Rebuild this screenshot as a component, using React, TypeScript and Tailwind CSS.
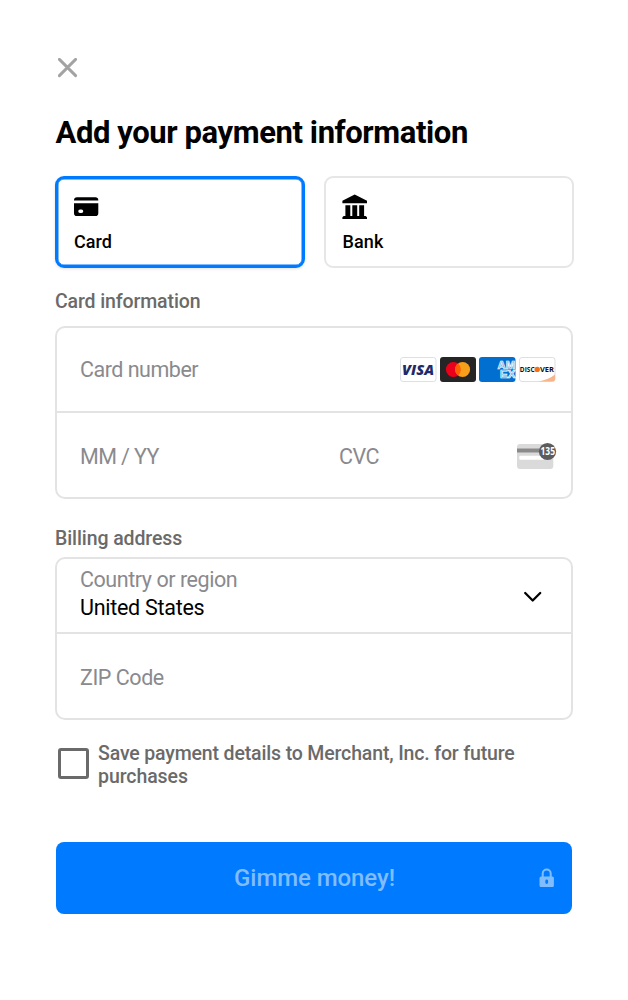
import React from "react";

function CloseIcon() {
  return (
    <svg width="20" height="20" viewBox="0 0 20 20" fill="none" stroke="#a3a3a3" strokeWidth="2.9" strokeLinecap="round">
      <path d="M1.4 1.4 17.600 17.600M17.600 1.400 1.400 17.600" />
    </svg>
  );
}

function CardIcon() {
  return (
    <svg width="26" height="26" viewBox="0 0 26 26">
      <path d="M0 6.6V6a3 3 0 0 1 3-2.8h18.4A3 3 0 0 1 24.3 6v.6Z" />
      <path fillRule="evenodd" d="M0 9.2h24.3v10a2.8 2.8 0 0 1-2.8 2.8H2.8A2.8 2.8 0 0 1 0 19.200ZM6 15.400a1.750 1.750 0 0 0 0 3.500h1.500a1.750 1.750 0 0 0 0-3.500Z" />
    </svg>
  );
}

function BankIcon() {
  return (
    <svg width="26" height="26" viewBox="0 0 26 26">
      <path d="M12.700.400 25 6.700V9.200H.4V6.700ZM3.400 11.200h4.900v11H3.400ZM10.300 11.200h4.900v11h-4.900ZM17.200 11.200h4.900v11h-4.900Z" />
      <path d="M1.700 22h22l1.300 1.200V25H.4v-1.800Z" />
    </svg>
  );
}

function CardBrands() {
  return (
    <div className="flex gap-[3px]">
      <svg width="37" height="25" viewBox="0 0 37 25">
        <rect x=".5" y=".5" width="35.500" height="24" rx="2.500" fill="#fff" stroke="#dcdfe6" />
        <text x="2" y="17.600" textLength="32" lengthAdjust="spacingAndGlyphs" fontFamily="Open Sans, sans-serif" fontSize="14.500" fontWeight="800" fontStyle="italic" fill="#1f2a6b">VISA</text>
      </svg>
      <svg width="36" height="25" viewBox="0 0 36 25">
        <rect width="36" height="25" rx="3" fill="#252525" />
        <circle cx="13.400" cy="12.500" r="7.500" fill="#eb001b" />
        <circle cx="22.600" cy="12.500" r="7.500" fill="#f79e1b" />
        <path d="M18 6.600a7.500 7.500 0 0 1 0 11.800 7.500 7.500 0 0 1 0-11.800Z" fill="#ff5f00" />
      </svg>
      <svg width="37" height="25" viewBox="0 0 37 25">
        <rect width="36.500" height="25" rx="3" fill="#016fd0" />
        <g fontFamily="Liberation Sans, sans-serif" fontSize="11" fontWeight="700" fill="#5aa2e2" stroke="#fff" strokeWidth=".7">
          <text x="18.600" y="12.400" textLength="17.500" lengthAdjust="spacingAndGlyphs">AM</text>
          <text x="21" y="21" textLength="15.500" lengthAdjust="spacingAndGlyphs">EX</text>
        </g>
      </svg>
      <svg width="37" height="25" viewBox="0 0 37 25">
        <rect x=".5" y=".5" width="35.500" height="24" rx="2.500" fill="#fff" stroke="#dcdfe6" />
        <path d="M36 17.500v4.500a2.500 2.500 0 0 1-2.500 2.500H19.500Q30 22.500 36 17.500Z" fill="#f9b58a" />
        <g fontFamily="Open Sans, sans-serif" fontSize="7.500" fontWeight="700" fill="#111">
          <text x=".8" y="15" textLength="14.800" lengthAdjust="spacingAndGlyphs">DISC</text>
          <text x="21" y="15" textLength="14" lengthAdjust="spacingAndGlyphs">VER</text>
        </g>
        <circle cx="18.200" cy="12.400" r="2.700" fill="#f47216" />
      </svg>
    </div>
  );
}

function CvcIcon() {
  return (
    <svg width="40" height="27" viewBox="0 0 40 27">
      <rect y="2" width="36.300" height="25" rx="3" fill="#dadada" />
      <rect y="6.500" width="36.300" height="4" fill="#8a8a8a" />
      <rect x="2.300" y="13.800" width="30" height="4" rx="1" fill="#fff" />
      <circle cx="30.500" cy="9.500" r="8.600" fill="#5c5c5c" />
      <text x="23.500" y="13" textLength="14.500" lengthAdjust="spacingAndGlyphs" fontFamily="Open Sans, sans-serif" fontSize="9.800" fontWeight="700" fill="#fff">135</text>
    </svg>
  );
}

function LockIcon() {
  return (
    <svg width="16" height="20" viewBox="0 0 16 20">
      <path d="M3.700 9V5.600a4 4 0 0 1 8 0V9" fill="none" stroke="#80bdff" strokeWidth="2" />
      <path fillRule="evenodd" d="M2 8.500h11.400A1.500 1.500 0 0 1 14.900 10v7.500a1.500 1.500 0 0 1-1.500 1.500H2A1.500 1.500 0 0 1 .5 17.500V10A1.500 1.500 0 0 1 2 8.500ZM7.700 11.600a1.400 1.400 0 0 0-1.400 1.400v1.600a1.400 1.400 0 0 0 2.800 0V13A1.400 1.400 0 0 0 7.700 11.600Z" fill="#80bdff" />
    </svg>
  );
}

export default function App() {
  return (
    <main className="h-[1000px] w-[628px] overflow-hidden bg-white pl-[55px] pt-[58px] font-['Roboto',sans-serif] text-black">
      <button aria-label="Close" className="ml-[3px] block h-5 w-5">
        <CloseIcon />
      </button>
      <h1 className="mt-[35px] h-[39px] pl-[0.5px] whitespace-nowrap text-[31px] leading-10 font-bold tracking-[-0.41px]">Add your payment information</h1>

      <div className="mt-6 flex gap-[19px]">
        <button className="flex h-[92px] w-[250px] flex-col items-start rounded-[9px] border-3 border-[#007aff] pl-4 pt-[15px] text-left shadow-[inset_0_0_0_0.5px_#007aff,0_1px_3px_rgba(0,0,0,0.12)]">
          <CardIcon />
          <span className="mt-2.5 text-[18px] leading-6 font-medium">Card</span>
        </button>
        <button className="flex h-[92px] w-[250px] flex-col items-start rounded-[9px] border-2 border-[#e6e6e6] pl-4 pt-4 text-left">
          <BankIcon />
          <span className="mt-2.5 ml-[0.5px] text-[18px] leading-6 font-medium tracking-[0.1px]">Bank</span>
        </button>
      </div>

      <h2 className="mt-[22px] h-6 text-[19.500px] leading-6 font-medium tracking-[-0.12px] text-[#6a6a6a]">Card information</h2>
      <section className="mt-3 h-[173px] w-[518px] rounded-[10px] border-2 border-[#e3e3e4] text-[21.500px] tracking-[-0.5px] text-[#8a8a8e]">
        <div className="flex h-[85px] items-center justify-between border-b-2 border-[#e3e3e4] pl-[23px] pr-[15px]">
          <span className="pt-px">Card number</span>
          <div className="tracking-normal"><CardBrands /></div>
        </div>
        <div className="flex h-[84px] items-center pl-[23px] pr-[14px] pt-[5px]">
          <span className="w-[259px] tracking-[-0.6px]">MM / YY</span>
          <span className="flex-1">CVC</span>
          <div className="mb-1 tracking-normal"><CvcIcon /></div>
        </div>
      </section>

      <h2 className="mt-7 h-6 text-[19.500px] leading-6 font-medium tracking-[-0.1px] text-[#6a6a6a]">Billing address</h2>
      <section className="mt-1.5 h-[163px] w-[518px] rounded-[10px] border-2 border-[#e3e3e4] text-[21.500px] tracking-[-0.45px] text-[#8a8a8e]">
        <div className="flex h-[75px] items-center justify-between border-b-2 border-[#e3e3e4] pl-[23px] pr-[29px]">
          <div className="leading-7">
            <div className="-mt-1">Country or region</div>
            <div className="tracking-[-0.28px] text-black">United States</div>
          </div>
          <svg className="mt-0.5" width="19" height="12" viewBox="0 0 19 12" fill="none" stroke="#000" strokeWidth="2.300" strokeLinecap="round" strokeLinejoin="round">
            <path d="m2.200 2 7.500 7.500L17.200 2" />
          </svg>
        </div>
        <div className="flex h-[84px] items-center pl-[23px] pt-[5px]">ZIP Code</div>
      </section>

      <label className="mt-[21px] flex h-[48px] gap-[9px] pl-[3px]">
        <span className="mt-[7px] block h-[31px] w-[31px] rounded-[3px] border-3 border-[#6a6a6a]" />
        <span className="pt-px whitespace-nowrap text-[19.500px] leading-[23px] font-medium tracking-[-0.15px] text-[#6a6a6a]">
          Save payment details to Merchant, Inc. for future
          <br />
          <span className="tracking-[-0.08px]">purchases</span>
        </span>
      </label>

      <button className="ml-px mt-[53px] grid h-[72px] w-[516px] grid-cols-[1fr_auto_1fr] items-center rounded-[8px] bg-[#007aff] pr-[17px] text-[24px] font-medium tracking-[-0.08px] text-[#80bdff]">
        <span />
        <span className="translate-x-[9px]">Gimme money!</span>
        <span className="justify-self-end"><LockIcon /></span>
      </button>
    </main>
  );
}
